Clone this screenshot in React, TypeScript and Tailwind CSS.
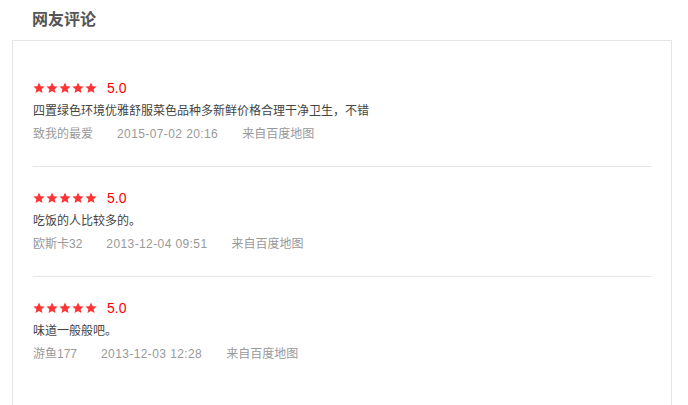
import React from "react";

const reviews = [
  { text: "四置绿色环境优雅舒服菜色品种多新鲜价格合理干净卫生，不错", user: "致我的最爱", date: "2015-07-02 20:16" },
  { text: "吃饭的人比较多的。", user: "欧斯卡32", date: "2013-12-04 09:51" },
  { text: "味道一般般吧。", user: "游鱼177", date: "2013-12-03 12:28" },
];

function Star() {
  return (
    <svg width="12" height="12" viewBox="0 0 24 24" className="shrink-0">
      <path d="M12 1l3.3 7.3 7.9.7-6 5.3 1.8 7.8L12 18.1 5 22.1l1.8-7.8-6-5.3 7.9-.7z" fill="#f33" />
    </svg>
  );
}

export default function App() {
  return (
    <div className="w-[688px] h-[405px] bg-white overflow-hidden" style={{ fontFamily: '"Liberation Sans", "Noto Sans CJK SC", sans-serif' }}>
      <div className="h-[40px] pl-[32px] leading-[40px] text-[16px] font-bold text-[#555]">网友评论</div>
      <div className="ml-[12px] w-[660px] h-[400px] border border-[#e5e5e5] px-[20px] pt-[16px]">
        {reviews.map((r, i) => (
          <div key={i} className="pt-[21px] pb-[21px] border-b border-[#e5e5e5] last:border-b-0">
            <div className="h-[20px] flex items-center">
              <div className="flex gap-[1px]">
                <Star /><Star /><Star /><Star /><Star />
              </div>
              <span className="ml-[10px] text-[14px] text-[#f00] leading-[20px]">5.0</span>
            </div>
            <div className="mt-[2px] h-[22px] leading-[22px] text-[12px] text-[#444]">{r.text}</div>
            <div className="mt-[1px] h-[22px] leading-[22px] text-[12px] text-[#999] flex">
              <span className="mr-[24px]">{r.user}</span>
              <span className="mr-[24px] tracking-[0.4px]">{r.date}</span>
              <span>来自百度地图</span>
            </div>
          </div>
        ))}
      </div>
    </div>
  );
}
